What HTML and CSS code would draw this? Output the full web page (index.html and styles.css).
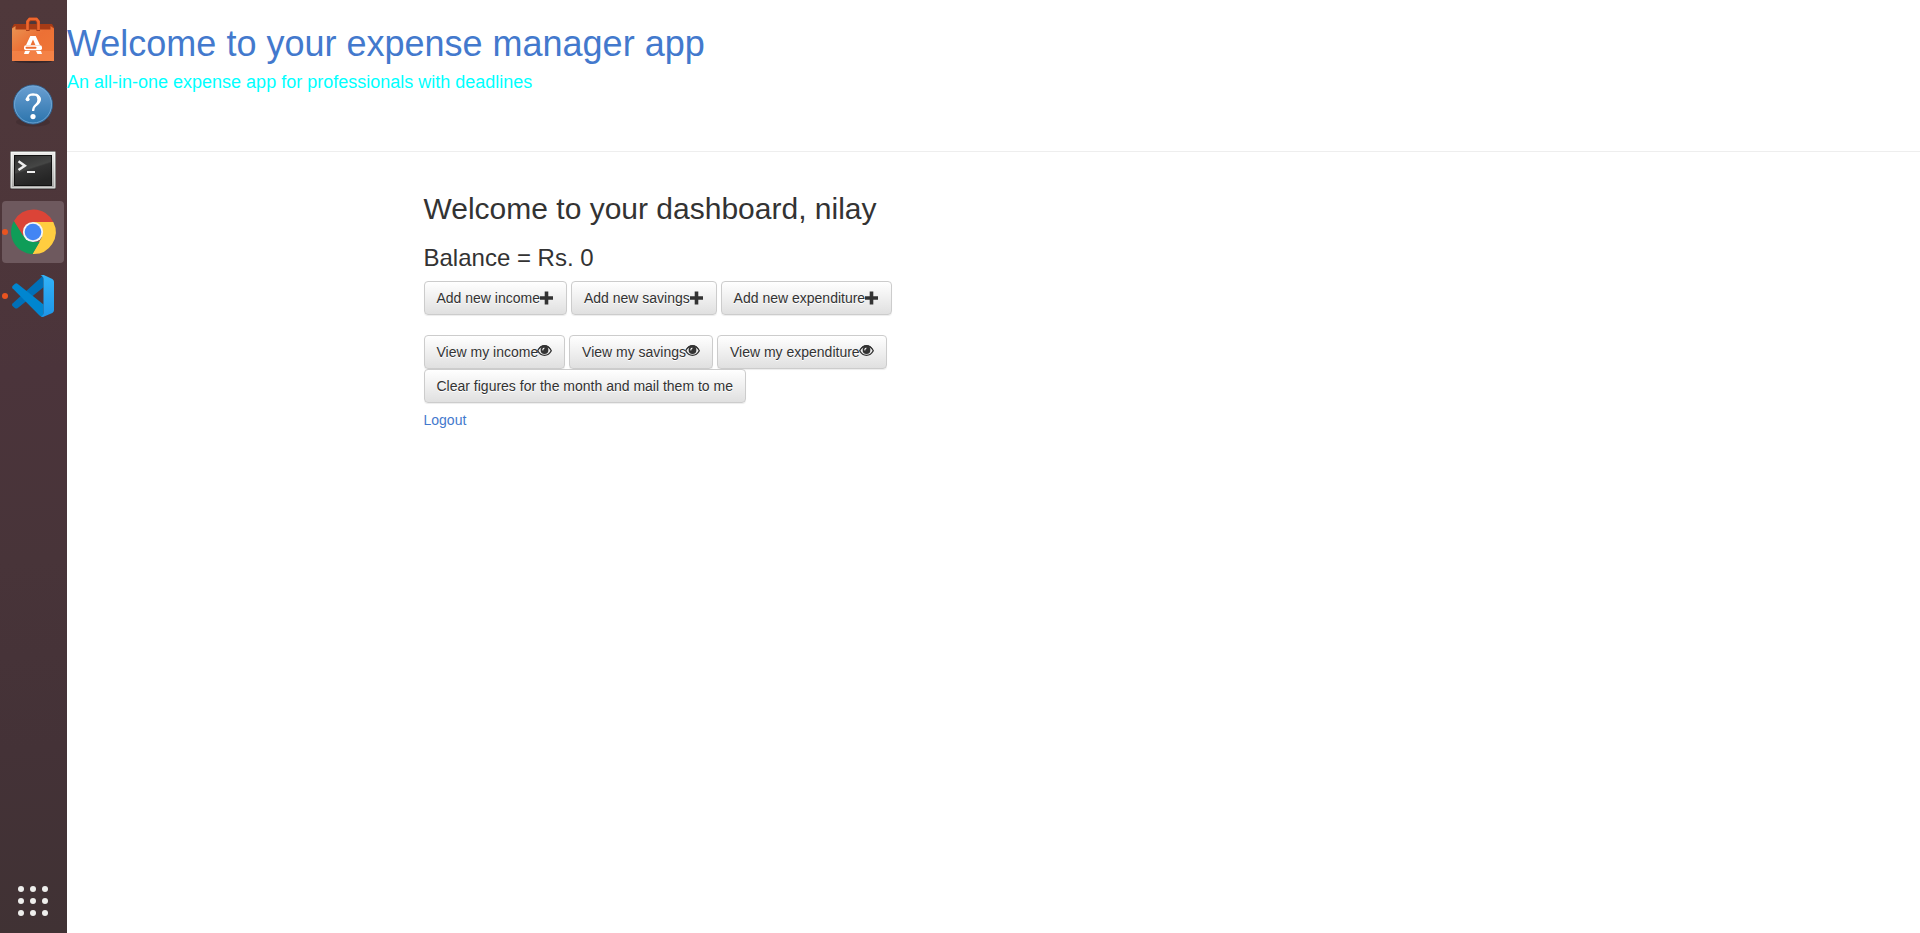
FILE: index.html
```html
<!DOCTYPE html>
<html lang="en">
<head>
<meta charset="utf-8">
<title>Expense manager</title>
<link rel="stylesheet" href="styles.css">
</head>
<body>
<svg class="defs" width="0" height="0" aria-hidden="true">
  <defs>
    <linearGradient id="bag" x1="0" y1="0" x2="1" y2="1"><stop offset="0" stop-color="#e89554"/><stop offset=".45" stop-color="#ec7035"/><stop offset="1" stop-color="#f07838"/></linearGradient>
    <linearGradient id="help" x1="0" y1="0" x2="0" y2="1"><stop offset="0" stop-color="#6b9fd2"/><stop offset="1" stop-color="#2b74ac"/></linearGradient>
    <linearGradient id="metal" x1="0" y1="0" x2="0" y2="1"><stop offset="0" stop-color="#eeeeec"/><stop offset="1" stop-color="#a5a5a3"/></linearGradient>
    <linearGradient id="screen" x1="0" y1="0" x2=".4" y2="1"><stop offset="0" stop-color="#303030"/><stop offset=".5" stop-color="#454645"/><stop offset=".55" stop-color="#333"/><stop offset="1" stop-color="#252525"/></linearGradient>
    <linearGradient id="panel" x1="0" y1="0" x2="0" y2="1"><stop offset="0" stop-color="#32b3f8"/><stop offset="1" stop-color="#1e96e8"/></linearGradient>
    <symbol id="plus" viewBox="0 0 14 14"><path d="M4.700.5h3.600v4.700h4.700v3.600H8.300v4.700H4.700V8.800H0V5.200h4.700z" fill="#333"/></symbol>
    <symbol id="eye" viewBox="0 0 15 14"><path d="M.7 6.700C4 .2 11 .2 14.300 6.700 11 12.800 4 12.800.7 6.700z" fill="none" stroke="#333" stroke-width="1.300"/><path d="M.4 6.300C4-.8 11-.8 14.600 6.300 11 1.600 4 1.600.4 6.300z" fill="#333"/><circle cx="7.500" cy="6" r="3.900" fill="#333"/><path d="M5.200 6.200Q5.100 4.100 7.200 3.600L7.500 4.600Q6.300 5.100 6.200 6.400z" fill="#fff"/></symbol>
  </defs>
</svg>
<div class="desktop">
  <aside class="dock">
    <div class="apps">
      <div class="app"><svg viewBox="0 0 62 62">
        <ellipse cx="31" cy="52.500" rx="19" ry="1.500" fill="#35262a"/>
        <path d="M10 18.500 12 15h38l2 3.500v5H10z" fill="#a63b16"/>
        <path d="M10 19.500 13.500 17v3.500h35V17l3.500 2.500V52H10z" fill="url(#bag)"/>
        <path d="M10 42h42v10H10z" fill="#fb9258" opacity=".45"/>
        <path d="M25.800 22v-9l2.200-2.800h6l2.200 2.800v9" fill="none" stroke="#a93e18" stroke-width="3.500"/>
        <path d="M25.500 21v-8.500L27.500 10h7l2 2.500V21" fill="none" stroke="#ee672f" stroke-width="2.600"/>
        <path d="M28.300 27h5.400l4.200 9h-4.500L31 30.500 28.600 36h-4.500zM23 42h5L26.500 45h-4.500zM34 42h5l1 3h-4.500z" fill="#fff"/>
        <rect x="22" y="36.200" width="18" height="5" rx="2" fill="#fff"/><rect x="23.500" y="37.700" width="11" height="2" rx="1" fill="#ef6c2f"/>
      </svg></div>
      <div class="app"><svg viewBox="0 0 62 62">
        <ellipse cx="31" cy="49" rx="17" ry="4.500" fill="#3a292d" opacity=".45"/>
        <circle cx="31" cy="31.500" r="19.500" fill="url(#help)" stroke="#315f8c"/>
        <circle cx="31" cy="31.500" r="18.500" fill="none" stroke="#79acd8" stroke-width=".8"/>
        <path d="M25.400 27Q25.300 21.300 31 21.300Q37 21.500 37 26.500Q37 29.500 34 31.900Q31.100 34.200 31.100 38" fill="none" stroke="#fff" stroke-width="2.200"/>
        <circle cx="25.600" cy="26.300" r="2" fill="#fff"/><path d="M34 20.500Q39.500 23 39 27Q38 31 33.500 33.500L35.500 27z" fill="#fff"/><circle cx="31" cy="43.600" r="2.600" fill="#fff"/>
      </svg></div>
      <div class="app"><svg viewBox="0 0 62 62">
        <path d="M8 51h46v1.600H8z" fill="#332529"/>
        <rect x="8.500" y="14.500" width="45" height="37" rx="1" fill="url(#metal)" stroke="#8a8a88"/>
        <rect x="9.500" y="15.500" width="43" height="35" fill="none" stroke="#fff" opacity=".5"/>
        <rect x="12" y="18" width="38" height="31" fill="#111"/><rect x="13" y="19" width="36" height="29" fill="url(#screen)"/>
        <path d="M16.500 24.300 22.800 28.700 16.500 33" fill="none" stroke="#eee" stroke-width="2.500"/><path d="M25 35h8" stroke="#eee" stroke-width="2"/>
      </svg></div>
      <div class="app active"><svg viewBox="0 0 62 62">
        <path d="M31 21h20.300A22 22 0 0 1 30.500 53L40 36z" fill="#ffcd40"/>
        <path d="M12 20 22.300 36 31 41H37.600L30.500 53A22 22 0 0 1 12 20z" fill="#0f9d58"/>
        <path d="M12 20A22 22 0 0 1 51.300 21H31Q23 22 21.300 35z" fill="#db4437"/>
        <circle cx="31" cy="31" r="10.100" fill="#f5f5f5"/><circle cx="31" cy="31" r="8.300" fill="#4285f4"/>
      </svg><i class="running"></i></div>
      <div class="app"><svg viewBox="0 0 62 62">
        <path d="M10.300 38.800Q9.500 40 10.500 41L13 43.200Q14.200 44 15.500 43.200L41.500 22.300V10.300z" fill="#0070b8"/>
        <path d="M10.500 21Q9.600 22.200 10.500 23.300L37.500 50.500Q39.200 52 41.500 51.500V39.500L15.500 18.700Q14.200 18 13 18.800z" fill="#0086d0"/>
        <path d="M41.500 51.800Q40 52.200 38.500 51.200 41.500 51 41.500 48V14Q41.500 11 38.500 10.500 40 9.700 41.800 10L50.300 14Q52 15 52 16.800V45.200Q52 47 50.300 48z" fill="url(#panel)"/>
      </svg><i class="running"></i></div>
    </div>
    <div class="grid"><i></i><i></i><i></i><i></i><i></i><i></i><i></i><i></i><i></i></div>
  </aside>
  <main class="page">
    <header class="header">
      <h1>Welcome to your expense manager app</h1>
      <h4>An all-in-one expense app for professionals with deadlines</h4>
    </header>
    <section class="dashboard">
      <h2>Welcome to your dashboard, nilay</h2>
      <h3>Balance = Rs. 0</h3>
      <div class="actions">
        <button class="btn">Add new income<svg class="plus"><use href="#plus"/></svg></button>
        <button class="btn">Add new savings<svg class="plus"><use href="#plus"/></svg></button>
        <button class="btn">Add new expenditure<svg class="plus"><use href="#plus"/></svg></button>
      </div>
      <div class="actions views">
        <button class="btn">View my income<svg class="eye"><use href="#eye"/></svg></button>
        <button class="btn">View my savings<svg class="eye"><use href="#eye"/></svg></button>
        <button class="btn">View my expenditure<svg class="eye"><use href="#eye"/></svg></button>
      </div>
      <div class="actions"><button class="btn">Clear figures for the month and mail them to me</button></div>
      <a class="logout" href="#">Logout</a>
    </section>
  </main>
</div>
</body>
</html>
```
FILE: styles.css
```css
* { box-sizing: border-box; }
body {
  margin: 0;
  font: 14px/20px "Liberation Sans", Arial, sans-serif;
  color: #333;
  background: #fff;
  overflow: hidden;
}
.defs { position: absolute; }
.desktop { display: flex; height: 933px; }
.dock {
  width: 67px;
  flex: none;
  display: flex;
  flex-direction: column;
  justify-content: space-between;
  align-items: center;
  padding: 9px 1px 17px 0;
  background: linear-gradient(175deg, #4f383b 0%, #4d363a 25%, #4b343b 40%, #483439 60%, #443237 80%, #403234 100%);
}
.apps { display: flex; flex-direction: column; gap: 2px; }
.app { position: relative; width: 62px; height: 62px; border-radius: 4px; }
.app svg { display: block; width: 62px; height: 62px; }
.active { background: #6e595e; }
.running {
  position: absolute;
  left: 0;
  top: 28px;
  width: 6px;
  height: 6px;
  border-radius: 50%;
  background: #e95420;
}
.grid { display: grid; grid-template-columns: repeat(3, 6px); gap: 6px; }
.grid i { width: 6px; height: 6px; border-radius: 50%; background: #eeeeec; }
.page { flex: 1; }
.header { height: 152px; padding-top: 24px; border-bottom: 1px solid #eee; }
h1, h2, h3, h4 { margin: 0; font-weight: 400; line-height: 1.1; }
h1 { font-size: 36px; color: #4379cd; }
h4 { margin-top: 9px; font-size: 18px; color: #0ff; }
.dashboard { padding: 40px 0 0 356.5px; }
h2 { font-size: 30px; }
h3 { margin-top: 20px; font-size: 24px; }
.actions { display: flex; gap: 3.89px; }
h3 + .actions { margin-top: 10px; }
.views { margin-top: 20px; }
.btn {
  display: flex;
  height: 34px;
  padding: 6px 12px;
  border: 1px solid #ccc;
  border-radius: 4px;
  background: linear-gradient(#fff, #e0e0e0);
  box-shadow: inset 0 1px 0 rgba(255, 255, 255, .15), 0 1px 1px rgba(0, 0, 0, .075);
  color: #333;
  font: inherit;
  text-shadow: 0 1px 0 #fff;
  white-space: nowrap;
}
.btn svg { width: 14px; height: 14px; margin-top: 3px; flex: none; }
.btn .eye { width: 15px; margin: 2px 0 0 -1px; }
.logout { display: inline-block; margin-top: 7px; color: #4379cd; text-decoration: none; }
```
